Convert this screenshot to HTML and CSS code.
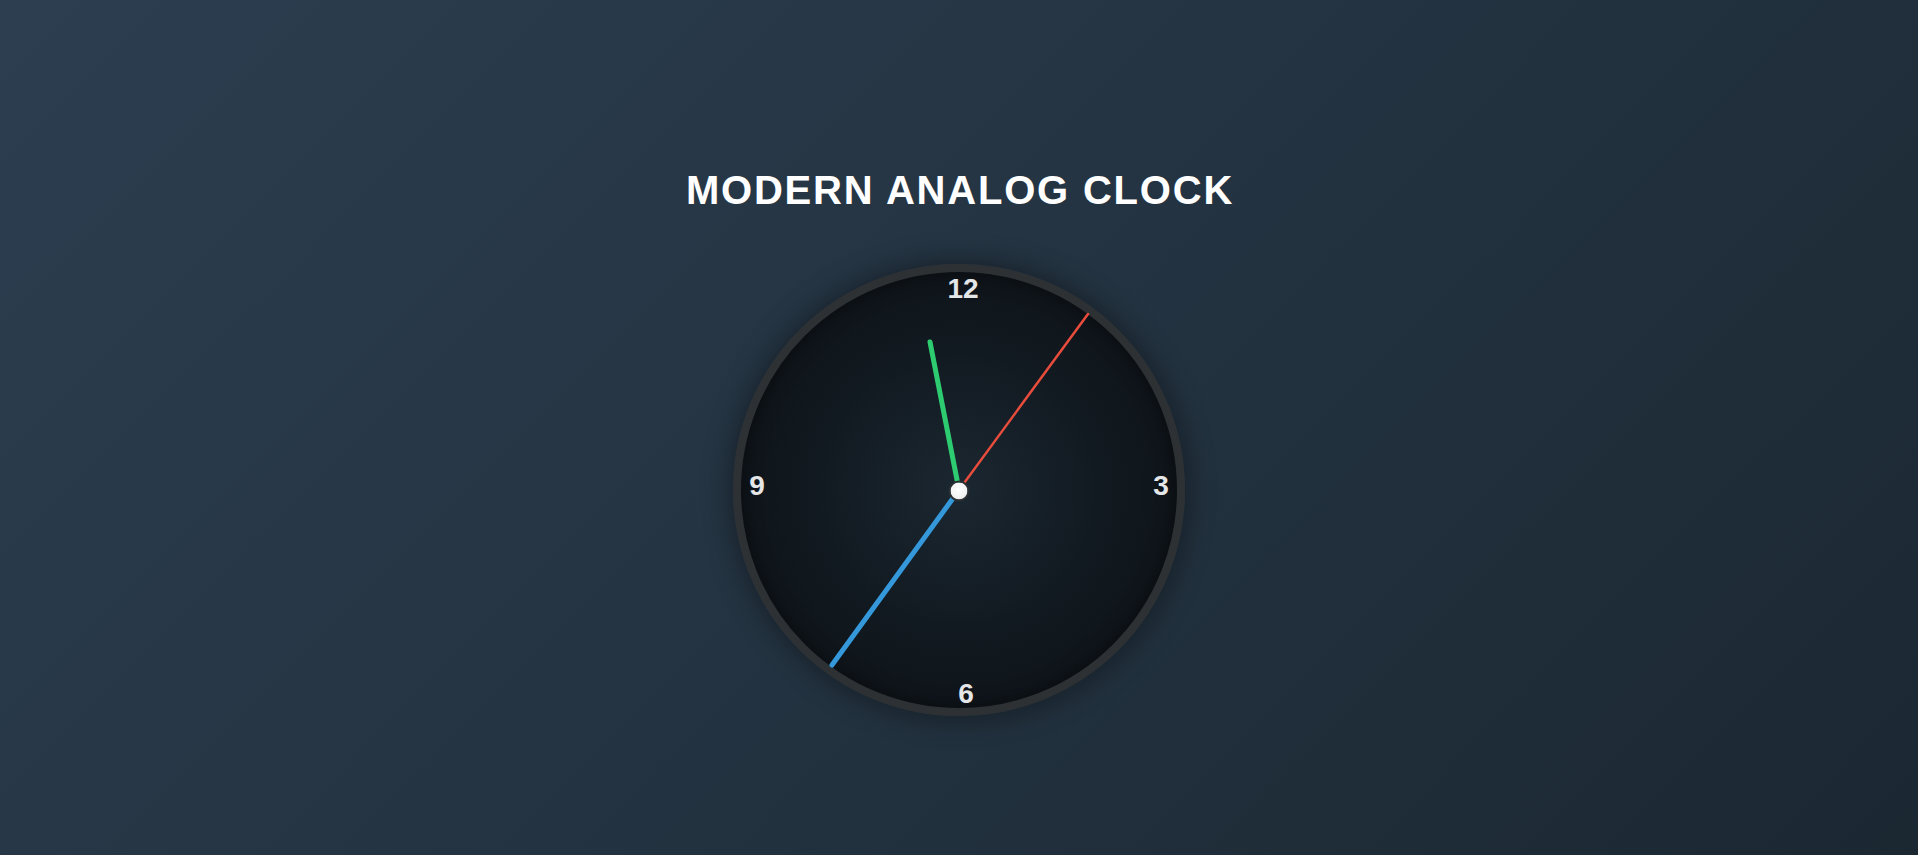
FILE: index.html
```html
<!DOCTYPE html>
<html lang="en">
<head>
<meta charset="utf-8">
<title>Modern Analog Clock</title>
<link rel="stylesheet" href="styles.css">
</head>
<body>
<main class="page">
  <h1 class="title">MODERN ANALOG CLOCK</h1>
  <div class="clock">
    <div class="face">
      <span class="num" style="left:230px;top:25px">12</span>
      <span class="num" style="left:428px;top:222px">3</span>
      <span class="num" style="left:233px;top:430px">6</span>
      <span class="num" style="left:24px;top:222px">9</span>
      <svg class="hands" viewBox="-226 -226 452 452" width="452" height="452">
        <line x1="0" y1="0" x2="129" y2="-176" class="hand-sec"/>
        <line x1="0" y1="0" x2="-127" y2="175" class="hand-min"/>
        <line x1="0" y1="0" x2="-29" y2="-148" class="hand-hour"/>
      </svg>
      <span class="pin"></span>
    </div>
  </div>
</main>
</body>
</html>
```

FILE: styles.css
```css
* { box-sizing: border-box; }
html, body { margin: 0; height: 100%; }
body {
  background: linear-gradient(135deg, #2c3e50 0%, #1b2832 100%);
  font-family: "Liberation Sans", Arial, sans-serif;
  overflow: hidden;
}
.page {
  height: 100vh;
  display: flex;
  flex-direction: column;
  align-items: center;
  padding-top: 167px;
}
.title {
  margin: 0 0 51px 0;
  color: #ffffff;
  font-size: 40px;
  font-weight: 700;
  letter-spacing: 1.8px;
  line-height: 46px;
  padding-left: 2px;
}
.clock {
  width: 452px;
  height: 452px;
  border-radius: 50%;
  border: 8px solid #2e3134;
  background: radial-gradient(circle at center, #1b2731 0%, #121a21 45%, #0a0d11 100%);
  box-shadow: 0 0 30px rgba(0, 0, 0, 0.45), inset 0 0 20px rgba(0,0,0,0.4);
  position: relative;
}
.face {
  position: absolute;
  left: -8px;
  top: -8px;
  width: 452px;
  height: 452px;
}
.num {
  position: absolute;
  transform: translate(-50%, -50%);
  color: #e4e6e8;
  font-size: 28px;
  font-weight: 700;
  line-height: 1;
}
.hands {
  position: absolute;
  left: 0;
  top: 0;
}
.hands line { stroke-linecap: round; }
.hand-hour { stroke: #2ecc71; stroke-width: 5; }
.hand-min { stroke: #3498db; stroke-width: 5; }
.hand-sec { stroke: #e74c3c; stroke-width: 2.5; }
.pin {
  position: absolute;
  left: 226px;
  top: 227px;
  width: 21px;
  height: 21px;
  transform: translate(-50%, -50%);
  border-radius: 50%;
  background: radial-gradient(circle at 45% 40%, #ffffff 0%, #f2f2f2 60%, #d8d8d8 100%);
  border: 2px solid #2b2f33;
}
```
